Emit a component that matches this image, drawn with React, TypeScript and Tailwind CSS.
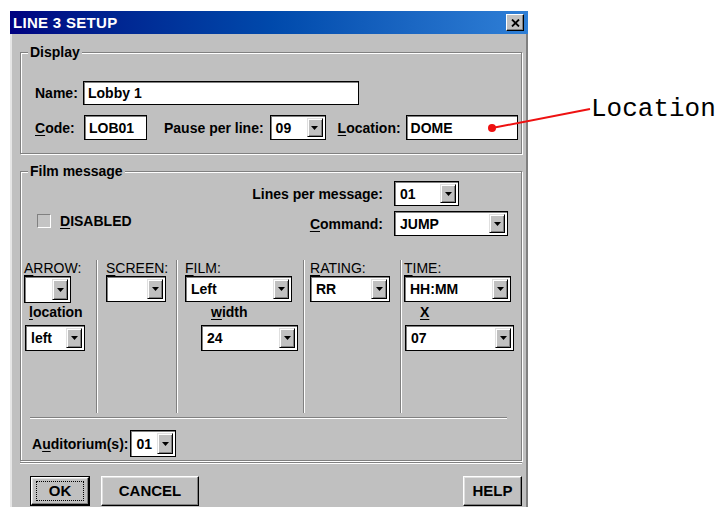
import React from 'react';

// mnemonic letter
const U = ({ children }: { children: React.ReactNode }) => (
  <span className="underline underline-offset-2">{children}</span>
);

const DropArrow = () => (
  <span className="ml-auto mr-[2px] flex h-[calc(100%-4px)] w-[16px] shrink-0 items-center justify-center border border-t-[#dfdfdf] border-l-[#dfdfdf] border-r-black border-b-black bg-[#c0c0c0] shadow-[inset_1px_1px_0_#fff,inset_-1px_-1px_0_#808080]">
    <svg width="7" height="4" viewBox="0 0 7 4">
      <path d="M0 0h7L3.5 4z" fill="#000" />
    </svg>
  </span>
);

const Combo = ({ value, className }: { value?: string; className: string }) => (
  <div
    className={`flex shrink-0 items-center border border-black bg-white shadow-[inset_1px_1px_0_#808080] ${className}`}
  >
    <span className="pl-[5px] text-[14px] font-bold leading-none">{value}</span>
    <DropArrow />
  </div>
);

const Field = ({ value, className }: { value: string; className: string }) => (
  <div
    className={`flex shrink-0 items-center border border-black bg-white pl-[4px] text-[14px] font-bold leading-none shadow-[inset_1px_1px_0_#808080] ${className}`}
  >
    {value}
  </div>
);

const Divider = () => <div className="w-px shrink-0 bg-[#808080] shadow-[1px_0_0_#fff]" />;

const Button = ({
  children,
  className,
  isDefault,
}: {
  children: React.ReactNode;
  className: string;
  isDefault?: boolean;
}) => (
  <button
    className={`h-[30px] shrink-0 bg-[#c0c0c0] p-0 text-[15px] font-bold text-black ${
      isDefault ? 'border border-black' : ''
    } ${className}`}
  >
    <div className="flex h-full w-full items-center justify-center border border-t-white border-l-white border-r-black border-b-black shadow-[inset_-1px_-1px_0_#808080,inset_1px_1px_0_#dfdfdf]">
      {isDefault ? (
        <div className="flex h-[calc(100%-6px)] w-[calc(100%-8px)] items-center justify-center border border-dotted border-black">
          {children}
        </div>
      ) : (
        children
      )}
    </div>
  </button>
);

export default function App() {
  return (
    <div className="relative h-[507px] overflow-hidden bg-white font-['Liberation_Sans',Arial,sans-serif] text-[14px] leading-[16px] text-black">
      <div className="ml-[10px] w-[518px] pt-[11px]">
        {/* title bar */}
        <div className="flex h-[23px] items-center bg-linear-to-r from-[#000080] to-[#2f7fd6] pl-[3px] pr-[4px]">
          <span className="text-[15px] font-bold tracking-[0.3px] text-white">LINE 3 SETUP</span>
          <div className="ml-auto flex h-[17px] w-[18px] items-center justify-center border border-t-white border-l-white border-r-black border-b-black bg-[#c0c0c0] shadow-[inset_-1px_-1px_0_#808080]">
            <svg width="9" height="8" viewBox="0 0 9 8">
              <path d="M1 0.5l7 7M8 0.5l-7 7" stroke="#000" strokeWidth="1.8" />
            </svg>
          </div>
        </div>

        <div className="border-l-2 border-r-2 border-l-[#e6e6e6] border-r-[#808080] bg-[#c0c0c0] pl-[8px] pr-[4px] pt-[10px] pb-[12px]">
          {/* Display group */}
          <fieldset className="border border-[#808080] shadow-[inset_1px_1px_0_#fff,1px_1px_0_#fff]">
            <legend className="ml-[7px] bg-[#c0c0c0] px-[2px] font-bold leading-[16px]">Display</legend>
            <div className="pl-[14px] pt-[21px] pb-[13px]">
              <div className="flex items-center">
                <span className="w-[48px] font-bold">Name:</span>
                <Field value="Lobby 1" className="h-[24px] w-[276px]" />
              </div>
              <div className="mt-[10px] flex items-center">
                <span className="w-[49px] font-bold">
                  <U>C</U>ode:
                </span>
                <Field value="LOB01" className="h-[25px] w-[63px]" />
                <span className="ml-[17px] font-bold">Pause per line:</span>
                <Combo value="09" className="ml-[6px] h-[25px] w-[56px]" />
                <span className="ml-[12px] font-bold">
                  <U>L</U>ocation:
                </span>
                <Field value="DOME" className="ml-[5px] h-[25px] w-[112px]" />
              </div>
            </div>
          </fieldset>

          {/* Film message group */}
          <fieldset className="mt-[9px] border border-[#808080] shadow-[inset_1px_1px_0_#fff,1px_1px_0_#fff]">
            <legend className="ml-[7px] bg-[#c0c0c0] px-[2px] font-bold leading-[16px]">Film message</legend>

            <div className="flex pt-[2px] pr-[13px]">
              <div className="flex items-center self-start pl-[16px] pt-[32px]">
                <span className="h-[14px] w-[14px] border border-t-[#808080] border-l-[#808080] border-r-white border-b-white bg-[#c4c4c4]" />
                <span className="ml-[9px] font-bold">
                  <U>D</U>ISABLED
                </span>
              </div>
              <div className="ml-auto grid grid-cols-[auto_auto] items-center gap-x-[11px] gap-y-[5px]">
                <span className="text-right font-bold">Lines per message:</span>
                <Combo value="01" className="h-[25px] w-[65px]" />
                <span className="text-right font-bold">
                  <U>C</U>ommand:
                </span>
                <Combo value="JUMP" className="h-[25px] w-[114px]" />
              </div>
            </div>

            {/* column pickers */}
            <div className="mt-[24px] flex h-[153px]">
              <div className="w-[75px] shrink-0 pl-[3px]">
                <div>
                  <U>A</U>RROW:
                </div>
                <Combo className="h-[27px] w-[47px]" />
                <div className="ml-[5px] mt-[1px] font-bold">
                  <U>l</U>ocation
                </div>
                <Combo value="left" className="ml-[1px] mt-[5px] h-[26px] w-[60px]" />
              </div>
              <Divider />
              <div className="w-[79px] shrink-0 pl-[9px]">
                <div>
                  <U>S</U>CREEN:
                </div>
                <Combo className="h-[26px] w-[60px]" />
              </div>
              <Divider />
              <div className="w-[126px] shrink-0 pl-[8px]">
                <div>
                  <U>F</U>ILM:
                </div>
                <Combo value="Left" className="h-[26px] w-[107px]" />
                <div className="ml-[26px] mt-[2px] font-bold">
                  <U>w</U>idth
                </div>
                <Combo value="24" className="ml-[16px] mt-[5px] h-[26px] w-[97px]" />
              </div>
              <Divider />
              <div className="w-[96px] shrink-0 pl-[6px]">
                <div>
                  <U>R</U>ATING:
                </div>
                <Combo value="RR" className="h-[26px] w-[80px]" />
              </div>
              <Divider />
              <div className="flex-1 pl-[3px]">
                <div>
                  <U>T</U>IME:
                </div>
                <Combo value="HH:MM" className="h-[26px] w-[107px]" />
                <div className="ml-[16px] mt-[2px] font-bold">
                  <U>X</U>
                </div>
                <Combo value="07" className="ml-[1px] mt-[5px] h-[26px] w-[109px]" />
              </div>
            </div>

            <div className="ml-[9px] mt-[4px] h-px w-[477px] bg-[#808080] shadow-[0_1px_0_#fff]" />

            <div className="mt-[12px] flex items-center pb-[3px] pl-[11px]">
              <span className="font-bold">
                A<U>u</U>ditorium(s):
              </span>
              <Combo value="01" className="ml-[2px] h-[27px] w-[46px]" />
            </div>
          </fieldset>

          <div className="mt-[1px] h-px bg-[#808080] shadow-[0_1px_0_#fff]" />

          <div className="mt-[13px] flex pl-[10px]">
            <Button isDefault className="w-[60px]">
              OK
            </Button>
            <Button className="ml-[11px] w-[98px]">CANCEL</Button>
            <Button className="ml-auto w-[59px]">HELP</Button>
          </div>
        </div>
      </div>

      {/* callout */}
      <svg className="pointer-events-none absolute left-0 top-0" width="721" height="507">
        <line x1="492" y1="128" x2="590" y2="109" stroke="#ee1111" strokeWidth="2" />
        <circle cx="492" cy="128" r="4" fill="#ee1111" />
      </svg>
      <span className="absolute left-[591px] top-[96px] font-['Liberation_Mono',monospace] text-[26px] leading-[26px]">
        Location
      </span>
    </div>
  );
}
